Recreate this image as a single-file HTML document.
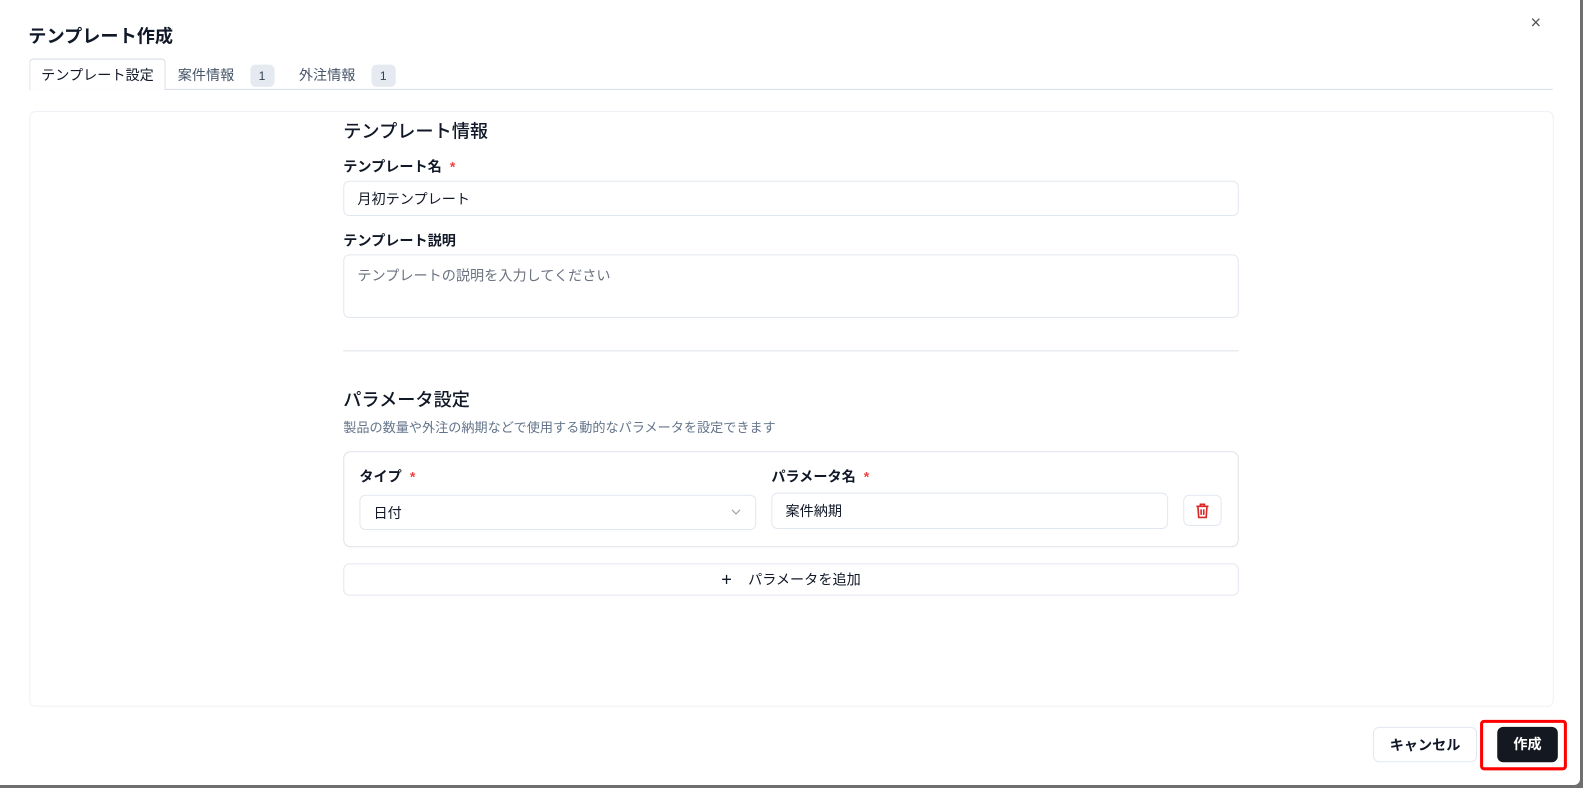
<!DOCTYPE html>
<html><head><meta charset="utf-8"><style>
*{box-sizing:border-box;margin:0;padding:0}
body{width:1583px;height:788px;background:#6f6f6f;font-family:"Liberation Sans","Noto Sans CJK JP",sans-serif;color:#111827;position:relative;overflow:hidden}
.m{position:absolute;left:0;top:0;width:1580px;height:785px;background:#fff;border-radius:0 0 6px 0;overflow:hidden}
.c{position:absolute;left:0;top:0;width:1568px;height:780px;transform:scale(1.0096);transform-origin:0 0}
.a{position:absolute}
.t{font-size:14px}
.inp{position:absolute;border:1px solid #e2e8f0;border-radius:6px;background:#fff;font-size:14px;padding-left:13px;display:flex;align-items:center}
.lbl{position:absolute;font-size:14px;font-weight:bold;color:#111827}
.req{color:#ef4444;margin-left:8px;font-weight:bold}
.badge{display:inline-block;background:#e5eaf0;border-radius:5px;width:24px;height:22px;text-align:center;line-height:22px;font-size:12px;color:#334155}
</style></head><body><div class="m"><div class="c">
<div class="a" style="left:28px;top:22px;font-size:18px;font-weight:bold">テンプレート作成</div>
<div class="a" style="left:1516px;top:12px;font-size:18px;color:#555">×</div>
<div class="a" style="left:29px;top:88px;width:1509px;height:1px;background:#d7dde5"></div>
<div class="a" style="left:29px;top:58px;width:135px;height:31px;border:1px solid #d7dde5;border-bottom:none;border-radius:4px 4px 0 0;background:#fff;font-size:14px;line-height:31px;text-align:center">テンプレート設定</div>
<div class="a t" style="left:176px;top:63px;color:#475569;line-height:22px">案件情報&nbsp;&nbsp;&nbsp;&nbsp;<span class="badge">1</span></div>
<div class="a t" style="left:296px;top:63px;color:#475569;line-height:22px">外注情報&nbsp;&nbsp;&nbsp;&nbsp;<span class="badge">1</span></div>
<div class="a" style="left:29px;top:110px;width:1510px;height:590px;border:1px solid #eef1f5;border-radius:6px"></div>
<div class="a" style="left:340px;top:116px;font-size:18px;font-weight:500">テンプレート情報</div>
<div class="lbl" style="left:340px;top:155px">テンプレート名<span class="req">*</span></div>
<div class="inp" style="left:340px;top:179px;width:887px;height:35px">月初テンプレート</div>
<div class="lbl" style="left:340px;top:228px">テンプレート説明</div>
<div class="inp" style="left:340px;top:252px;width:887px;height:63px;align-items:flex-start;padding-top:10px;color:#6b7280">テンプレートの説明を入力してください</div>
<div class="a" style="left:340px;top:347px;width:887px;height:1px;background:#dde2e8"></div>
<div class="a" style="left:340px;top:382px;font-size:18px;font-weight:500">パラメータ設定</div>
<div class="a" style="left:340px;top:413px;font-size:13px;color:#64748b">製品の数量や外注の納期などで使用する動的なパラメータを設定できます</div>
<div class="a" style="left:340px;top:447px;width:887px;height:95px;border:1px solid #dde2e8;border-radius:7px"></div>
<div class="lbl" style="left:356px;top:462px">タイプ<span class="req">*</span></div>
<div class="lbl" style="left:764px;top:462px">パラメータ名<span class="req">*</span></div>
<div class="inp" style="left:356px;top:490px;width:393px;height:35px">日付<svg style="position:absolute;right:14px;top:13px" width="10" height="7" viewBox="0 0 10 7"><path d="M1 1l4 4 4-4" fill="none" stroke="#9ca3af" stroke-width="1.2"/></svg></div>
<div class="inp" style="left:764px;top:488px;width:393px;height:36px">案件納期</div>
<div class="inp" style="left:1172px;top:490px;width:38px;height:31px;padding:0;justify-content:center"><svg width="14" height="16" viewBox="0 0 14 16"><path d="M1 3.5h12M5 3.5V1.5h4v2M2.5 3.5l.8 11h7.4l.8-11M5.7 6.5v5.5M8.3 6.5v5.5" fill="none" stroke="#dc2626" stroke-width="1.6"/></svg></div>
<div class="inp" style="left:340px;top:558px;width:887px;height:32px;justify-content:center;padding:0;font-size:14px"><span style="font-size:18px;margin-right:16px;font-weight:300">+</span>パラメータを追加</div>
<div class="inp" style="left:1360px;top:720px;width:103px;height:35px;justify-content:center;padding:0;font-weight:bold">キャンセル</div>
<div class="a" style="left:1466px;top:713px;width:86px;height:50px;border:3px solid #ff0000;border-radius:4px"></div>
<div class="a" style="left:1483px;top:720px;width:60px;height:35px;background:#141820;border-radius:6px;color:#fff;font-size:14px;font-weight:bold;text-align:center;line-height:35px">作成</div>
</div></div></body></html>
